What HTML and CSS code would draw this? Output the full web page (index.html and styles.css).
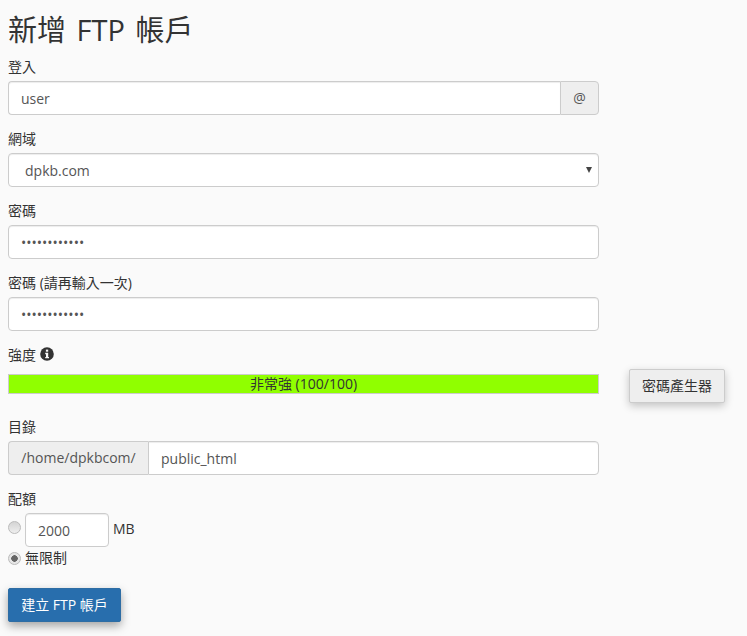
FILE: index.html
```html
<!DOCTYPE html>
<html lang="zh-Hant">
<head>
  <meta charset="UTF-8">
  <title>新增 FTP 帳戶</title>
  <link rel="stylesheet" href="styles.css">
</head>
<body>

  <h1>新增 FTP 帳戶</h1>

  <form class="ftp-form">
    <div class="form-group">
      <label class="label">登入</label>
      <div class="input-group">
        <input class="form-control" type="text" value="user">
        <span class="addon addon-right">@</span>
      </div>
    </div>

    <div class="form-group">
      <label class="label">網域</label>
      <div class="select-wrap">
        <select class="form-control domain-select">
          <option>dpkb.com</option>
        </select>
      </div>
    </div>

    <div class="form-group">
      <label class="label">密碼</label>
      <input class="form-control" type="password" value="abcdefghijkl">
    </div>

    <div class="form-group">
      <label class="label">密碼 (請再輸入一次)</label>
      <input class="form-control" type="password" value="abcdefghijkl">
    </div>

    <div class="strength-row">
      <div class="strength-main">
        <label class="label">強度
          <svg class="info-icon" viewBox="0 0 14 14" width="14" height="14">
            <circle cx="7" cy="7" r="6.8" fill="#333"/>
            <rect x="5.9" y="2.6" width="2.3" height="2.1" fill="#fafafa"/>
            <path d="M5.2 5.8H8.2V9.9H9V11.3H5.2V9.9H6V7.2H5.2Z" fill="#fafafa"/>
          </svg>
        </label>
        <div class="strength-bar">非常強 (100/100)</div>
      </div>
      <button class="btn btn-default" type="button">密碼產生器</button>
    </div>

    <div class="form-group">
      <label class="label">目錄</label>
      <div class="input-group">
        <span class="addon addon-left">/home/dpkbcom/</span>
        <input class="form-control" type="text" value="public_html">
      </div>
    </div>

    <div class="quota-group">
      <label class="label">配額</label>
      <div class="quota-row">
        <input class="radio" type="radio" name="quota">
        <input class="form-control quota-input" type="text" value="2000">
        <span class="unit">MB</span>
      </div>
      <div class="unlimited-row">
        <input class="radio" type="radio" name="quota" checked>
        <span>無限制</span>
      </div>
    </div>

    <button class="btn btn-primary" type="button">建立 FTP 帳戶</button>
  </form>

</body>
</html>
```

FILE: styles.css
```css
* {
  box-sizing: border-box;
}

body {
  margin: 0;
  padding: 0 8px;
  height: 636px;
  overflow: hidden;
  background-color: #fafafa;
  color: #333;
  font-family: "Open Sans", "Noto Sans CJK TC", sans-serif;
  font-size: 14px;
  line-height: 20px;
}

h1 {
  margin: 0;
  height: 57px;
  padding-top: 10px;
  font-size: 29px;
  font-weight: 400;
  line-height: 40px;
  word-spacing: 3px;
}

.ftp-form {
  width: 717px;
}

.form-group {
  width: 591px;
  margin-bottom: 14px;
}

.label {
  display: block;
  height: 24px;
  line-height: 20px;
}

.form-control {
  display: block;
  width: 100%;
  height: 34px;
  padding: 6px 12px;
  background-color: #fff;
  border: 1px solid #ccc;
  border-radius: 4px;
  box-shadow: inset 0 1px 1px rgba(0,0,0,0.075);
  color: #555;
  font-family: inherit;
  font-size: 14px;
  line-height: 20px;
}

.input-group {
  display: flex;
}

.input-group .form-control {
  flex: 1;
  min-width: 0;
}

.input-group .form-control:first-child {
  border-radius: 4px 0 0 4px;
  border-right: 0;
}

.input-group .form-control:last-child {
  border-radius: 0 4px 4px 0;
}

.addon {
  display: flex;
  align-items: center;
  justify-content: center;
  height: 34px;
  background-color: #eee;
  border: 1px solid #ccc;
  color: #555;
}

.addon-right {
  width: 39px;
  border-radius: 0 4px 4px 0;
}

.addon-left {
  width: 140px;
  border-right: 0;
  border-radius: 4px 0 0 4px;
}

.select-wrap {
  position: relative;
}

.select-wrap::after {
  content: "";
  position: absolute;
  top: 14px;
  right: 7px;
  border-left: 3px solid transparent;
  border-right: 3px solid transparent;
  border-top: 6px solid #444;
}

.domain-select {
  appearance: none;
  padding: 7px 12px 5px 16px;
}

.strength-row {
  display: flex;
  align-items: flex-start;
  gap: 30px;
  margin-bottom: 14px;
}

.strength-main {
  width: 591px;
}

.strength-row .label {
  display: flex;
  align-items: flex-start;
  gap: 4px;
  height: 29px;
}

.info-icon {
  margin-top: 2px;
}

.strength-bar {
  height: 20px;
  background-color: #90ff00;
  border: 1px solid #ccc;
  text-align: center;
  line-height: 18px;
}

.btn {
  height: 34px;
  border: 1px solid #ccc;
  border-radius: 2px;
  font-family: inherit;
  font-size: 14px;
  line-height: 20px;
}

.btn-default {
  width: 96px;
  margin-top: 24px;
  padding: 0;
  background-color: #eee;
  color: #333;
  box-shadow: 0 3px 8px rgba(0,0,0,0.22);
}

.btn-primary {
  display: block;
  width: 113px;
  padding: 0;
  background-color: #286ead;
  border-color: #2e6da4;
  color: #fff;
  box-shadow: 0 4px 10px rgba(0,0,0,0.35);
}

.quota-group {
  margin-bottom: 19px;
}

.quota-row {
  display: flex;
  align-items: flex-start;
  height: 34px;
}

.radio {
  appearance: none;
  width: 13px;
  height: 13px;
  margin: 8px 4px 0 0;
  background: linear-gradient(#d4d4d4, #eee);
  border: 1px solid #bbb;
  border-radius: 50%;
}

.radio:checked {
  background: radial-gradient(circle, #666 0 3px, #e6e6e6 3.5px);
}

.quota-input {
  width: 84px;
}

.unit {
  margin-left: 4px;
  line-height: 32px;
}

.unlimited-row {
  display: flex;
  align-items: center;
  height: 22px;
}

.unlimited-row .radio {
  margin-top: 0;
}
```
